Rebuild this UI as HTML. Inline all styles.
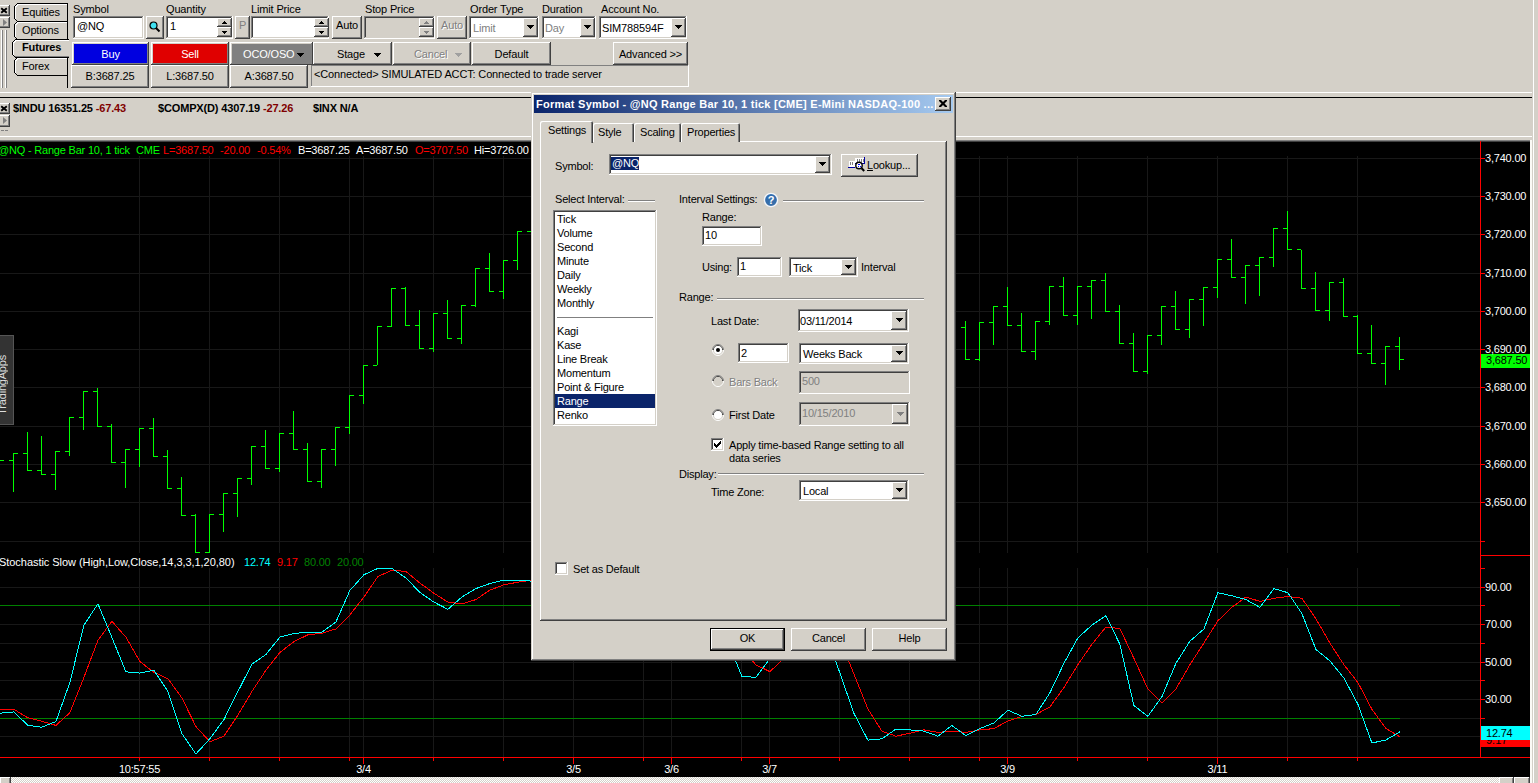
<!DOCTYPE html><html><head><meta charset="utf-8"><title>TradeStation</title><style>

html,body{margin:0;padding:0}
body{width:1538px;height:783px;overflow:hidden;position:relative;background:#d4d0c8;font:11px/13px "Liberation Sans",sans-serif;color:#000}
.abs{position:absolute;box-sizing:border-box}
.ab{position:absolute;display:block}
.t{position:absolute;white-space:pre;font:11px/13px "Liberation Sans",sans-serif;letter-spacing:-0.15px}
.dlg .t{letter-spacing:-0.2px}
.raised{background:#d4d0c8;box-shadow:inset -1px -1px #404040,inset 1px 1px #fff,inset -2px -2px #808080,inset 2px 2px #d4d0c8}
.raised2{box-shadow:inset -1px -1px #404040,inset 1px 1px #fff,inset -2px -2px #808080,inset 2px 2px #d4d0c8}
.sunk{box-shadow:inset -1px -1px #fff,inset 1px 1px #808080,inset -2px -2px #d4d0c8,inset 2px 2px #404040}
.thinsunk{box-shadow:inset -1px -1px #fff,inset 1px 1px #808080}
.winframe{background:#d4d0c8;box-shadow:inset -1px -1px #404040,inset 1px 1px #d4d0c8,inset -2px -2px #808080,inset 2px 2px #fff}
.defbtn{background:#d4d0c8;border:1px solid #000;box-shadow:inset -1px -1px #404040,inset 1px 1px #fff,inset -2px -2px #808080}
.tabv{background:#d4d0c8;border:1px solid #000;border-left:1px solid #000;border-radius:4px 0 0 4px;box-shadow:inset 1px 1px #fff}
.tabv.act{box-shadow:inset 1px 1px #fff}
.tabh{background:#d4d0c8;box-shadow:inset 1px 1px #fff,inset -1px 0 #404040,inset -2px 0 #808080;border-radius:2px 2px 0 0}
.tabh.act{box-shadow:inset 1px 1px #fff,inset -1px 0 #404040,inset -2px 0 #808080}

</style></head><body>
<svg id="chart" width="1538" height="783" viewBox="0 0 1538 783" style="position:absolute;left:0;top:0" shape-rendering="crispEdges">
<rect x="0" y="141" width="1530" height="636" fill="#000"/>
<rect x="0" y="140" width="1530" height="1" fill="#808080"/>
<rect x="0" y="141" width="1530" height="1" fill="#404040"/>
<rect x="0" y="158" width="1480" height="1" fill="#181818"/>
<rect x="0" y="196" width="1480" height="1" fill="#181818"/>
<rect x="0" y="234" width="1480" height="1" fill="#181818"/>
<rect x="0" y="273" width="1480" height="1" fill="#181818"/>
<rect x="0" y="311" width="1480" height="1" fill="#181818"/>
<rect x="0" y="349" width="1480" height="1" fill="#181818"/>
<rect x="0" y="387" width="1480" height="1" fill="#181818"/>
<rect x="0" y="426" width="1480" height="1" fill="#181818"/>
<rect x="0" y="464" width="1480" height="1" fill="#181818"/>
<rect x="0" y="502" width="1480" height="1" fill="#181818"/>
<rect x="0" y="541" width="1480" height="1" fill="#181818"/>
<rect x="139" y="156" width="1" height="397" fill="#181818"/>
<rect x="139" y="568" width="1" height="189" fill="#181818"/>
<rect x="209" y="156" width="1" height="397" fill="#181818"/>
<rect x="209" y="568" width="1" height="189" fill="#181818"/>
<rect x="279" y="156" width="1" height="397" fill="#181818"/>
<rect x="279" y="568" width="1" height="189" fill="#181818"/>
<rect x="349" y="156" width="1" height="397" fill="#181818"/>
<rect x="349" y="568" width="1" height="189" fill="#181818"/>
<rect x="363" y="156" width="1" height="397" fill="#181818"/>
<rect x="363" y="568" width="1" height="189" fill="#181818"/>
<rect x="433" y="156" width="1" height="397" fill="#181818"/>
<rect x="433" y="568" width="1" height="189" fill="#181818"/>
<rect x="503" y="156" width="1" height="397" fill="#181818"/>
<rect x="503" y="568" width="1" height="189" fill="#181818"/>
<rect x="573" y="156" width="1" height="397" fill="#181818"/>
<rect x="573" y="568" width="1" height="189" fill="#181818"/>
<rect x="643" y="156" width="1" height="397" fill="#181818"/>
<rect x="643" y="568" width="1" height="189" fill="#181818"/>
<rect x="671" y="156" width="1" height="397" fill="#181818"/>
<rect x="671" y="568" width="1" height="189" fill="#181818"/>
<rect x="741" y="156" width="1" height="397" fill="#181818"/>
<rect x="741" y="568" width="1" height="189" fill="#181818"/>
<rect x="769" y="156" width="1" height="397" fill="#181818"/>
<rect x="769" y="568" width="1" height="189" fill="#181818"/>
<rect x="839" y="156" width="1" height="397" fill="#181818"/>
<rect x="839" y="568" width="1" height="189" fill="#181818"/>
<rect x="909" y="156" width="1" height="397" fill="#181818"/>
<rect x="909" y="568" width="1" height="189" fill="#181818"/>
<rect x="979" y="156" width="1" height="397" fill="#181818"/>
<rect x="979" y="568" width="1" height="189" fill="#181818"/>
<rect x="1007" y="156" width="1" height="397" fill="#181818"/>
<rect x="1007" y="568" width="1" height="189" fill="#181818"/>
<rect x="1077" y="156" width="1" height="397" fill="#181818"/>
<rect x="1077" y="568" width="1" height="189" fill="#181818"/>
<rect x="1147" y="156" width="1" height="397" fill="#181818"/>
<rect x="1147" y="568" width="1" height="189" fill="#181818"/>
<rect x="1217" y="156" width="1" height="397" fill="#181818"/>
<rect x="1217" y="568" width="1" height="189" fill="#181818"/>
<rect x="1287" y="156" width="1" height="397" fill="#181818"/>
<rect x="1287" y="568" width="1" height="189" fill="#181818"/>
<rect x="1357" y="156" width="1" height="397" fill="#181818"/>
<rect x="1357" y="568" width="1" height="189" fill="#181818"/>
<rect x="0" y="587" width="1480" height="1" fill="#181818"/>
<rect x="0" y="624" width="1480" height="1" fill="#181818"/>
<rect x="0" y="643" width="1480" height="1" fill="#181818"/>
<rect x="0" y="662" width="1480" height="1" fill="#181818"/>
<rect x="0" y="680" width="1480" height="1" fill="#181818"/>
<rect x="0" y="699" width="1480" height="1" fill="#181818"/>
<rect x="0" y="736" width="1480" height="1" fill="#181818"/>
<rect x="0" y="605" width="1400" height="1" fill="#008000"/>
<rect x="0" y="718" width="1400" height="1" fill="#008000"/>
<rect x="1400" y="605" width="80" height="1" fill="#181818"/>
<rect x="1400" y="718" width="80" height="1" fill="#181818"/>
<rect x="0" y="460" width="4" height="1" fill="#00ff00"/>
<rect x="13" y="453" width="1" height="39" fill="#00ff00"/>
<rect x="9" y="460" width="4" height="1" fill="#00ff00"/>
<rect x="14" y="453" width="4" height="1" fill="#00ff00"/>
<rect x="27" y="432" width="1" height="39" fill="#00ff00"/>
<rect x="23" y="453" width="4" height="1" fill="#00ff00"/>
<rect x="28" y="470" width="4" height="1" fill="#00ff00"/>
<rect x="41" y="436" width="1" height="39" fill="#00ff00"/>
<rect x="37" y="470" width="4" height="1" fill="#00ff00"/>
<rect x="42" y="474" width="4" height="1" fill="#00ff00"/>
<rect x="55" y="451" width="1" height="39" fill="#00ff00"/>
<rect x="51" y="474" width="4" height="1" fill="#00ff00"/>
<rect x="56" y="451" width="4" height="1" fill="#00ff00"/>
<rect x="69" y="417" width="1" height="39" fill="#00ff00"/>
<rect x="65" y="451" width="4" height="1" fill="#00ff00"/>
<rect x="70" y="417" width="4" height="1" fill="#00ff00"/>
<rect x="83" y="391" width="1" height="39" fill="#00ff00"/>
<rect x="79" y="417" width="4" height="1" fill="#00ff00"/>
<rect x="84" y="391" width="4" height="1" fill="#00ff00"/>
<rect x="97" y="388" width="1" height="39" fill="#00ff00"/>
<rect x="93" y="391" width="4" height="1" fill="#00ff00"/>
<rect x="98" y="426" width="4" height="1" fill="#00ff00"/>
<rect x="111" y="424" width="1" height="39" fill="#00ff00"/>
<rect x="107" y="426" width="4" height="1" fill="#00ff00"/>
<rect x="112" y="462" width="4" height="1" fill="#00ff00"/>
<rect x="125" y="449" width="1" height="39" fill="#00ff00"/>
<rect x="121" y="462" width="4" height="1" fill="#00ff00"/>
<rect x="126" y="449" width="4" height="1" fill="#00ff00"/>
<rect x="139" y="428" width="1" height="39" fill="#00ff00"/>
<rect x="135" y="449" width="4" height="1" fill="#00ff00"/>
<rect x="140" y="428" width="4" height="1" fill="#00ff00"/>
<rect x="153" y="418" width="1" height="39" fill="#00ff00"/>
<rect x="149" y="428" width="4" height="1" fill="#00ff00"/>
<rect x="154" y="456" width="4" height="1" fill="#00ff00"/>
<rect x="167" y="450" width="1" height="39" fill="#00ff00"/>
<rect x="163" y="456" width="4" height="1" fill="#00ff00"/>
<rect x="168" y="488" width="4" height="1" fill="#00ff00"/>
<rect x="181" y="477" width="1" height="39" fill="#00ff00"/>
<rect x="177" y="488" width="4" height="1" fill="#00ff00"/>
<rect x="182" y="515" width="4" height="1" fill="#00ff00"/>
<rect x="195" y="514" width="1" height="39" fill="#00ff00"/>
<rect x="191" y="515" width="4" height="1" fill="#00ff00"/>
<rect x="196" y="552" width="4" height="1" fill="#00ff00"/>
<rect x="209" y="514" width="1" height="39" fill="#00ff00"/>
<rect x="205" y="552" width="4" height="1" fill="#00ff00"/>
<rect x="210" y="514" width="4" height="1" fill="#00ff00"/>
<rect x="223" y="493" width="1" height="39" fill="#00ff00"/>
<rect x="219" y="514" width="4" height="1" fill="#00ff00"/>
<rect x="224" y="493" width="4" height="1" fill="#00ff00"/>
<rect x="237" y="478" width="1" height="39" fill="#00ff00"/>
<rect x="233" y="493" width="4" height="1" fill="#00ff00"/>
<rect x="238" y="478" width="4" height="1" fill="#00ff00"/>
<rect x="251" y="446" width="1" height="39" fill="#00ff00"/>
<rect x="247" y="478" width="4" height="1" fill="#00ff00"/>
<rect x="252" y="446" width="4" height="1" fill="#00ff00"/>
<rect x="265" y="430" width="1" height="39" fill="#00ff00"/>
<rect x="261" y="446" width="4" height="1" fill="#00ff00"/>
<rect x="266" y="468" width="4" height="1" fill="#00ff00"/>
<rect x="279" y="433" width="1" height="39" fill="#00ff00"/>
<rect x="275" y="468" width="4" height="1" fill="#00ff00"/>
<rect x="280" y="433" width="4" height="1" fill="#00ff00"/>
<rect x="293" y="411" width="1" height="39" fill="#00ff00"/>
<rect x="289" y="433" width="4" height="1" fill="#00ff00"/>
<rect x="294" y="449" width="4" height="1" fill="#00ff00"/>
<rect x="307" y="443" width="1" height="39" fill="#00ff00"/>
<rect x="303" y="449" width="4" height="1" fill="#00ff00"/>
<rect x="308" y="481" width="4" height="1" fill="#00ff00"/>
<rect x="321" y="449" width="1" height="39" fill="#00ff00"/>
<rect x="317" y="481" width="4" height="1" fill="#00ff00"/>
<rect x="322" y="449" width="4" height="1" fill="#00ff00"/>
<rect x="335" y="427" width="1" height="39" fill="#00ff00"/>
<rect x="331" y="449" width="4" height="1" fill="#00ff00"/>
<rect x="336" y="427" width="4" height="1" fill="#00ff00"/>
<rect x="349" y="395" width="1" height="39" fill="#00ff00"/>
<rect x="345" y="427" width="4" height="1" fill="#00ff00"/>
<rect x="350" y="395" width="4" height="1" fill="#00ff00"/>
<rect x="363" y="365" width="1" height="39" fill="#00ff00"/>
<rect x="359" y="395" width="4" height="1" fill="#00ff00"/>
<rect x="364" y="365" width="4" height="1" fill="#00ff00"/>
<rect x="377" y="326" width="1" height="39" fill="#00ff00"/>
<rect x="373" y="365" width="4" height="1" fill="#00ff00"/>
<rect x="378" y="326" width="4" height="1" fill="#00ff00"/>
<rect x="391" y="288" width="1" height="39" fill="#00ff00"/>
<rect x="387" y="326" width="4" height="1" fill="#00ff00"/>
<rect x="392" y="288" width="4" height="1" fill="#00ff00"/>
<rect x="405" y="287" width="1" height="39" fill="#00ff00"/>
<rect x="401" y="288" width="4" height="1" fill="#00ff00"/>
<rect x="406" y="325" width="4" height="1" fill="#00ff00"/>
<rect x="419" y="310" width="1" height="39" fill="#00ff00"/>
<rect x="415" y="325" width="4" height="1" fill="#00ff00"/>
<rect x="420" y="348" width="4" height="1" fill="#00ff00"/>
<rect x="433" y="313" width="1" height="39" fill="#00ff00"/>
<rect x="429" y="348" width="4" height="1" fill="#00ff00"/>
<rect x="434" y="313" width="4" height="1" fill="#00ff00"/>
<rect x="447" y="300" width="1" height="39" fill="#00ff00"/>
<rect x="443" y="313" width="4" height="1" fill="#00ff00"/>
<rect x="448" y="338" width="4" height="1" fill="#00ff00"/>
<rect x="461" y="305" width="1" height="39" fill="#00ff00"/>
<rect x="457" y="338" width="4" height="1" fill="#00ff00"/>
<rect x="462" y="305" width="4" height="1" fill="#00ff00"/>
<rect x="475" y="268" width="1" height="39" fill="#00ff00"/>
<rect x="471" y="305" width="4" height="1" fill="#00ff00"/>
<rect x="476" y="268" width="4" height="1" fill="#00ff00"/>
<rect x="489" y="253" width="1" height="39" fill="#00ff00"/>
<rect x="485" y="268" width="4" height="1" fill="#00ff00"/>
<rect x="490" y="291" width="4" height="1" fill="#00ff00"/>
<rect x="503" y="260" width="1" height="39" fill="#00ff00"/>
<rect x="499" y="291" width="4" height="1" fill="#00ff00"/>
<rect x="504" y="260" width="4" height="1" fill="#00ff00"/>
<rect x="517" y="231" width="1" height="39" fill="#00ff00"/>
<rect x="513" y="260" width="4" height="1" fill="#00ff00"/>
<rect x="518" y="231" width="4" height="1" fill="#00ff00"/>
<rect x="965" y="321" width="1" height="39" fill="#00ff00"/>
<rect x="961" y="327" width="4" height="1" fill="#00ff00"/>
<rect x="966" y="359" width="4" height="1" fill="#00ff00"/>
<rect x="979" y="322" width="1" height="39" fill="#00ff00"/>
<rect x="975" y="359" width="4" height="1" fill="#00ff00"/>
<rect x="980" y="322" width="4" height="1" fill="#00ff00"/>
<rect x="993" y="306" width="1" height="39" fill="#00ff00"/>
<rect x="989" y="322" width="4" height="1" fill="#00ff00"/>
<rect x="994" y="306" width="4" height="1" fill="#00ff00"/>
<rect x="1007" y="287" width="1" height="39" fill="#00ff00"/>
<rect x="1003" y="306" width="4" height="1" fill="#00ff00"/>
<rect x="1008" y="325" width="4" height="1" fill="#00ff00"/>
<rect x="1021" y="313" width="1" height="39" fill="#00ff00"/>
<rect x="1017" y="325" width="4" height="1" fill="#00ff00"/>
<rect x="1022" y="351" width="4" height="1" fill="#00ff00"/>
<rect x="1035" y="321" width="1" height="39" fill="#00ff00"/>
<rect x="1031" y="351" width="4" height="1" fill="#00ff00"/>
<rect x="1036" y="321" width="4" height="1" fill="#00ff00"/>
<rect x="1049" y="286" width="1" height="39" fill="#00ff00"/>
<rect x="1045" y="321" width="4" height="1" fill="#00ff00"/>
<rect x="1050" y="286" width="4" height="1" fill="#00ff00"/>
<rect x="1063" y="277" width="1" height="39" fill="#00ff00"/>
<rect x="1059" y="286" width="4" height="1" fill="#00ff00"/>
<rect x="1064" y="315" width="4" height="1" fill="#00ff00"/>
<rect x="1077" y="286" width="1" height="39" fill="#00ff00"/>
<rect x="1073" y="315" width="4" height="1" fill="#00ff00"/>
<rect x="1078" y="286" width="4" height="1" fill="#00ff00"/>
<rect x="1091" y="280" width="1" height="39" fill="#00ff00"/>
<rect x="1087" y="286" width="4" height="1" fill="#00ff00"/>
<rect x="1092" y="280" width="4" height="1" fill="#00ff00"/>
<rect x="1105" y="273" width="1" height="39" fill="#00ff00"/>
<rect x="1101" y="280" width="4" height="1" fill="#00ff00"/>
<rect x="1106" y="311" width="4" height="1" fill="#00ff00"/>
<rect x="1119" y="305" width="1" height="39" fill="#00ff00"/>
<rect x="1115" y="311" width="4" height="1" fill="#00ff00"/>
<rect x="1120" y="343" width="4" height="1" fill="#00ff00"/>
<rect x="1133" y="333" width="1" height="39" fill="#00ff00"/>
<rect x="1129" y="343" width="4" height="1" fill="#00ff00"/>
<rect x="1134" y="371" width="4" height="1" fill="#00ff00"/>
<rect x="1147" y="335" width="1" height="39" fill="#00ff00"/>
<rect x="1143" y="371" width="4" height="1" fill="#00ff00"/>
<rect x="1148" y="335" width="4" height="1" fill="#00ff00"/>
<rect x="1161" y="306" width="1" height="39" fill="#00ff00"/>
<rect x="1157" y="335" width="4" height="1" fill="#00ff00"/>
<rect x="1162" y="306" width="4" height="1" fill="#00ff00"/>
<rect x="1175" y="291" width="1" height="39" fill="#00ff00"/>
<rect x="1171" y="306" width="4" height="1" fill="#00ff00"/>
<rect x="1176" y="329" width="4" height="1" fill="#00ff00"/>
<rect x="1189" y="299" width="1" height="39" fill="#00ff00"/>
<rect x="1185" y="329" width="4" height="1" fill="#00ff00"/>
<rect x="1190" y="299" width="4" height="1" fill="#00ff00"/>
<rect x="1203" y="287" width="1" height="39" fill="#00ff00"/>
<rect x="1199" y="299" width="4" height="1" fill="#00ff00"/>
<rect x="1204" y="287" width="4" height="1" fill="#00ff00"/>
<rect x="1217" y="259" width="1" height="39" fill="#00ff00"/>
<rect x="1213" y="287" width="4" height="1" fill="#00ff00"/>
<rect x="1218" y="259" width="4" height="1" fill="#00ff00"/>
<rect x="1231" y="239" width="1" height="39" fill="#00ff00"/>
<rect x="1227" y="259" width="4" height="1" fill="#00ff00"/>
<rect x="1232" y="277" width="4" height="1" fill="#00ff00"/>
<rect x="1245" y="265" width="1" height="39" fill="#00ff00"/>
<rect x="1241" y="277" width="4" height="1" fill="#00ff00"/>
<rect x="1246" y="265" width="4" height="1" fill="#00ff00"/>
<rect x="1259" y="257" width="1" height="39" fill="#00ff00"/>
<rect x="1255" y="265" width="4" height="1" fill="#00ff00"/>
<rect x="1260" y="257" width="4" height="1" fill="#00ff00"/>
<rect x="1273" y="228" width="1" height="39" fill="#00ff00"/>
<rect x="1269" y="257" width="4" height="1" fill="#00ff00"/>
<rect x="1274" y="228" width="4" height="1" fill="#00ff00"/>
<rect x="1287" y="211" width="1" height="39" fill="#00ff00"/>
<rect x="1283" y="228" width="4" height="1" fill="#00ff00"/>
<rect x="1288" y="249" width="4" height="1" fill="#00ff00"/>
<rect x="1301" y="250" width="1" height="39" fill="#00ff00"/>
<rect x="1297" y="249" width="4" height="1" fill="#00ff00"/>
<rect x="1302" y="288" width="4" height="1" fill="#00ff00"/>
<rect x="1315" y="272" width="1" height="39" fill="#00ff00"/>
<rect x="1311" y="288" width="4" height="1" fill="#00ff00"/>
<rect x="1316" y="310" width="4" height="1" fill="#00ff00"/>
<rect x="1329" y="282" width="1" height="39" fill="#00ff00"/>
<rect x="1325" y="310" width="4" height="1" fill="#00ff00"/>
<rect x="1330" y="282" width="4" height="1" fill="#00ff00"/>
<rect x="1343" y="278" width="1" height="39" fill="#00ff00"/>
<rect x="1339" y="282" width="4" height="1" fill="#00ff00"/>
<rect x="1344" y="316" width="4" height="1" fill="#00ff00"/>
<rect x="1357" y="315" width="1" height="39" fill="#00ff00"/>
<rect x="1353" y="316" width="4" height="1" fill="#00ff00"/>
<rect x="1358" y="353" width="4" height="1" fill="#00ff00"/>
<rect x="1371" y="325" width="1" height="39" fill="#00ff00"/>
<rect x="1367" y="353" width="4" height="1" fill="#00ff00"/>
<rect x="1372" y="363" width="4" height="1" fill="#00ff00"/>
<rect x="1385" y="346" width="1" height="39" fill="#00ff00"/>
<rect x="1381" y="363" width="4" height="1" fill="#00ff00"/>
<rect x="1386" y="346" width="4" height="1" fill="#00ff00"/>
<rect x="527" y="231" width="4" height="1" fill="#00ff00"/>
<rect x="1399" y="337" width="1" height="33" fill="#00ff00"/>
<rect x="1395" y="346" width="4" height="1" fill="#00ff00"/>
<rect x="1400" y="359" width="4" height="1" fill="#00ff00"/>
<g clip-path="url(#stclip)">
<polyline points="-0.1,709.3 13.9,709.3 27.9,717.8 41.9,721.3 55.9,725.4 69.9,712.7 83.9,677.4 97.9,640.4 111.9,621.3 125.9,637.1 139.9,661.6 153.9,672.3 167.9,678.7 181.9,697.9 195.9,726.5 209.9,741.8 223.9,736.2 237.9,715.2 251.9,691.5 265.9,670.3 279.9,652.4 293.9,641.7 307.9,634.8 321.9,633.3 335.9,628.9 349.9,614.9 363.9,597.0 377.9,576.6 391.9,570.2 405.9,571.5 419.9,583.0 433.9,593.2 447.9,602.1 461.9,603.9 475.9,599.6 489.9,590.1 503.9,584.8 517.9,582.2 531.9,580.0 545.9,582.0 559.9,590.0 573.9,600.0 587.9,612.0 601.9,622.0 615.9,632.0 629.9,640.0 643.9,648.0 657.9,652.0 671.9,652.0 685.9,648.0 699.9,640.0 713.9,640.0 727.9,645.0 741.9,648.0 755.9,664.8 769.9,671.7 783.9,658.3 797.9,650.0 811.9,645.0 825.9,640.0 839.9,639.0 853.9,674.0 867.9,709.0 881.9,731.1 895.9,736.2 909.9,733.2 923.9,729.9 937.9,732.4 951.9,731.1 965.9,732.4 979.9,729.9 993.9,728.6 1007.9,720.9 1021.9,716.3 1035.9,714.5 1049.9,706.9 1063.9,687.7 1077.9,664.7 1091.9,644.3 1105.9,627.0 1119.9,628.5 1133.9,658.3 1147.9,689.0 1161.9,703.0 1175.9,689.0 1189.9,664.7 1203.9,643.0 1217.9,620.8 1231.9,607.3 1245.9,597.0 1259.9,601.4 1273.9,598.3 1287.9,596.5 1301.9,598.3 1315.9,618.7 1329.9,643.0 1343.9,664.7 1357.9,682.5 1371.9,709.3 1385.9,728.5 1399.9,736.9" fill="none" stroke="#ff0000" stroke-width="1" shape-rendering="crispEdges"/>
<polyline points="-0.1,713.2 13.9,711.9 27.9,725.4 41.9,727.2 55.9,721.6 69.9,682.5 83.9,625.1 97.9,603.9 111.9,637.5 125.9,671.8 139.9,673.1 153.9,670.3 167.9,691.5 181.9,733.6 195.9,754.0 209.9,738.7 223.9,719.6 237.9,691.5 251.9,664.2 265.9,654.5 279.9,637.1 293.9,633.5 307.9,632.2 321.9,632.2 335.9,622.0 349.9,590.4 363.9,574.8 377.9,568.4 391.9,568.4 405.9,577.9 419.9,592.4 433.9,602.1 447.9,609.3 461.9,597.0 475.9,588.6 489.9,583.5 503.9,580.0 517.9,580.0 531.9,581.2 545.9,590.0 559.9,600.0 573.9,610.0 587.9,620.0 601.9,630.0 615.9,640.0 629.9,648.0 643.9,652.0 657.9,655.0 671.9,650.0 685.9,640.0 699.9,630.0 713.9,640.0 727.9,641.8 741.9,676.3 755.9,677.4 769.9,658.7 783.9,645.0 797.9,630.0 811.9,625.0 825.9,633.0 839.9,673.0 853.9,713.3 867.9,740.1 881.9,738.8 895.9,729.1 909.9,729.9 923.9,731.1 937.9,736.2 951.9,725.5 965.9,735.7 979.9,728.6 993.9,723.0 1007.9,710.2 1021.9,716.3 1035.9,714.5 1049.9,692.8 1063.9,663.4 1077.9,637.9 1091.9,625.1 1105.9,615.7 1119.9,644.3 1133.9,705.6 1147.9,716.3 1161.9,696.7 1175.9,663.4 1189.9,641.2 1203.9,629.0 1217.9,592.7 1231.9,595.8 1245.9,599.6 1259.9,607.3 1273.9,588.6 1287.9,592.7 1301.9,613.6 1315.9,649.4 1329.9,660.9 1343.9,678.0 1357.9,704.2 1371.9,743.0 1385.9,740.0 1399.9,731.8" fill="none" stroke="#00ffff" stroke-width="1" shape-rendering="crispEdges"/>
</g>
<defs><clipPath id="stclip"><rect x="0" y="556" width="1480" height="201"/></clipPath></defs>
<rect x="1480" y="141" width="1" height="617" fill="#ff0000"/>
<rect x="0" y="757" width="1530" height="1" fill="#ff0000"/>
<rect x="1480" y="555" width="50" height="1" fill="#ff0000"/>
<rect x="1481" y="158" width="4" height="1" fill="#ff0000"/>
<rect x="1481" y="196" width="4" height="1" fill="#ff0000"/>
<rect x="1481" y="234" width="4" height="1" fill="#ff0000"/>
<rect x="1481" y="273" width="4" height="1" fill="#ff0000"/>
<rect x="1481" y="311" width="4" height="1" fill="#ff0000"/>
<rect x="1481" y="349" width="4" height="1" fill="#ff0000"/>
<rect x="1481" y="387" width="4" height="1" fill="#ff0000"/>
<rect x="1481" y="426" width="4" height="1" fill="#ff0000"/>
<rect x="1481" y="464" width="4" height="1" fill="#ff0000"/>
<rect x="1481" y="502" width="4" height="1" fill="#ff0000"/>
<rect x="1481" y="541" width="4" height="1" fill="#ff0000"/>
<rect x="1481" y="568" width="4" height="1" fill="#ff0000"/>
<rect x="1481" y="587" width="4" height="1" fill="#ff0000"/>
<rect x="1481" y="605" width="4" height="1" fill="#ff0000"/>
<rect x="1481" y="624" width="4" height="1" fill="#ff0000"/>
<rect x="1481" y="643" width="4" height="1" fill="#ff0000"/>
<rect x="1481" y="662" width="4" height="1" fill="#ff0000"/>
<rect x="1481" y="680" width="4" height="1" fill="#ff0000"/>
<rect x="1481" y="699" width="4" height="1" fill="#ff0000"/>
<rect x="1481" y="718" width="4" height="1" fill="#ff0000"/>
<rect x="1481" y="736" width="4" height="1" fill="#ff0000"/>
<rect x="139" y="758" width="1" height="3" fill="#ff0000"/>
<rect x="209" y="758" width="1" height="3" fill="#ff0000"/>
<rect x="279" y="758" width="1" height="3" fill="#ff0000"/>
<rect x="349" y="758" width="1" height="3" fill="#ff0000"/>
<rect x="363" y="758" width="1" height="6" fill="#ff0000"/>
<rect x="433" y="758" width="1" height="3" fill="#ff0000"/>
<rect x="503" y="758" width="1" height="3" fill="#ff0000"/>
<rect x="573" y="758" width="1" height="6" fill="#ff0000"/>
<rect x="643" y="758" width="1" height="3" fill="#ff0000"/>
<rect x="671" y="758" width="1" height="6" fill="#ff0000"/>
<rect x="741" y="758" width="1" height="3" fill="#ff0000"/>
<rect x="769" y="758" width="1" height="6" fill="#ff0000"/>
<rect x="839" y="758" width="1" height="3" fill="#ff0000"/>
<rect x="909" y="758" width="1" height="3" fill="#ff0000"/>
<rect x="979" y="758" width="1" height="3" fill="#ff0000"/>
<rect x="1007" y="758" width="1" height="6" fill="#ff0000"/>
<rect x="1077" y="758" width="1" height="3" fill="#ff0000"/>
<rect x="1147" y="758" width="1" height="3" fill="#ff0000"/>
<rect x="1217" y="758" width="1" height="6" fill="#ff0000"/>
<rect x="1287" y="758" width="1" height="3" fill="#ff0000"/>
<rect x="1357" y="758" width="1" height="3" fill="#ff0000"/>
<rect x="1481" y="354" width="49" height="14" fill="#00ff00"/>
<rect x="1481" y="733" width="49" height="14" fill="#ff0000"/>
<text x="1486" y="744" font-family="Liberation Sans" font-size="11" fill="#000">9.17</text>
<rect x="1481" y="726" width="49" height="14" fill="#00ffff"/>
<rect x="1530" y="140" width="2" height="643" fill="#fbfaf6"/>
<rect x="1533" y="0" width="1" height="783" fill="#ffffff"/>
</svg>
<div style="position:absolute;white-space:pre;font:11px/13px Liberation Sans,sans-serif;letter-spacing:-0.2px;left:1485px;top:152px;color:#fff">3,740.00</div>
<div style="position:absolute;white-space:pre;font:11px/13px Liberation Sans,sans-serif;letter-spacing:-0.2px;left:1485px;top:190px;color:#fff">3,730.00</div>
<div style="position:absolute;white-space:pre;font:11px/13px Liberation Sans,sans-serif;letter-spacing:-0.2px;left:1485px;top:228px;color:#fff">3,720.00</div>
<div style="position:absolute;white-space:pre;font:11px/13px Liberation Sans,sans-serif;letter-spacing:-0.2px;left:1485px;top:267px;color:#fff">3,710.00</div>
<div style="position:absolute;white-space:pre;font:11px/13px Liberation Sans,sans-serif;letter-spacing:-0.2px;left:1485px;top:305px;color:#fff">3,700.00</div>
<div style="position:absolute;white-space:pre;font:11px/13px Liberation Sans,sans-serif;letter-spacing:-0.2px;left:1485px;top:343px;color:#fff">3,690.00</div>
<div style="position:absolute;white-space:pre;font:11px/13px Liberation Sans,sans-serif;letter-spacing:-0.2px;left:1485px;top:381px;color:#fff">3,680.00</div>
<div style="position:absolute;white-space:pre;font:11px/13px Liberation Sans,sans-serif;letter-spacing:-0.2px;left:1485px;top:420px;color:#fff">3,670.00</div>
<div style="position:absolute;white-space:pre;font:11px/13px Liberation Sans,sans-serif;letter-spacing:-0.2px;left:1485px;top:458px;color:#fff">3,660.00</div>
<div style="position:absolute;white-space:pre;font:11px/13px Liberation Sans,sans-serif;letter-spacing:-0.2px;left:1485px;top:496px;color:#fff">3,650.00</div>
<div style="position:absolute;white-space:pre;font:11px/13px Liberation Sans,sans-serif;letter-spacing:-0.2px;left:1486px;top:354px;color:#000">3,687.50</div>
<div style="position:absolute;white-space:pre;font:11px/13px Liberation Sans,sans-serif;letter-spacing:-0.2px;left:1485px;top:581px;color:#fff">90.00</div>
<div style="position:absolute;white-space:pre;font:11px/13px Liberation Sans,sans-serif;letter-spacing:-0.2px;left:1485px;top:618px;color:#fff">70.00</div>
<div style="position:absolute;white-space:pre;font:11px/13px Liberation Sans,sans-serif;letter-spacing:-0.2px;left:1485px;top:656px;color:#fff">50.00</div>
<div style="position:absolute;white-space:pre;font:11px/13px Liberation Sans,sans-serif;letter-spacing:-0.2px;left:1485px;top:693px;color:#fff">30.00</div>
<div style="position:absolute;white-space:pre;font:11px/13px Liberation Sans,sans-serif;letter-spacing:-0.2px;left:1486px;top:727px;color:#000">12.74</div>
<div style="position:absolute;white-space:pre;font:11px/13px Liberation Sans,sans-serif;letter-spacing:-0.2px;left:99.5px;width:80px;text-align:center;top:763px;color:#fff">10:57:55</div>
<div style="position:absolute;white-space:pre;font:11px/13px Liberation Sans,sans-serif;letter-spacing:-0.2px;left:323.5px;width:80px;text-align:center;top:763px;color:#fff">3/4</div>
<div style="position:absolute;white-space:pre;font:11px/13px Liberation Sans,sans-serif;letter-spacing:-0.2px;left:533.5px;width:80px;text-align:center;top:763px;color:#fff">3/5</div>
<div style="position:absolute;white-space:pre;font:11px/13px Liberation Sans,sans-serif;letter-spacing:-0.2px;left:631.5px;width:80px;text-align:center;top:763px;color:#fff">3/6</div>
<div style="position:absolute;white-space:pre;font:11px/13px Liberation Sans,sans-serif;letter-spacing:-0.2px;left:729.5px;width:80px;text-align:center;top:763px;color:#fff">3/7</div>
<div style="position:absolute;white-space:pre;font:11px/13px Liberation Sans,sans-serif;letter-spacing:-0.2px;left:967.5px;width:80px;text-align:center;top:763px;color:#fff">3/9</div>
<div style="position:absolute;white-space:pre;font:11px/13px Liberation Sans,sans-serif;letter-spacing:-0.2px;left:1177.5px;width:80px;text-align:center;top:763px;color:#fff">3/11</div>
<div style="position:absolute;white-space:pre;font:11px/13px Liberation Sans,sans-serif;letter-spacing:-0.2px;left:-2px;top:144px;color:#00ff00">@NQ - Range Bar 10, 1 tick</div>
<div style="position:absolute;white-space:pre;font:11px/13px Liberation Sans,sans-serif;letter-spacing:-0.2px;left:136px;top:144px;color:#00ff00">CME</div>
<div style="position:absolute;white-space:pre;font:11px/13px Liberation Sans,sans-serif;letter-spacing:-0.2px;left:163px;top:144px;color:#ff0000">L=3687.50</div>
<div style="position:absolute;white-space:pre;font:11px/13px Liberation Sans,sans-serif;letter-spacing:-0.2px;left:220px;top:144px;color:#ff0000">-20.00</div>
<div style="position:absolute;white-space:pre;font:11px/13px Liberation Sans,sans-serif;letter-spacing:-0.2px;left:257px;top:144px;color:#ff0000">-0.54%</div>
<div style="position:absolute;white-space:pre;font:11px/13px Liberation Sans,sans-serif;letter-spacing:-0.2px;left:298px;top:144px;color:#fff">B=3687.25</div>
<div style="position:absolute;white-space:pre;font:11px/13px Liberation Sans,sans-serif;letter-spacing:-0.2px;left:356px;top:144px;color:#fff">A=3687.50</div>
<div style="position:absolute;white-space:pre;font:11px/13px Liberation Sans,sans-serif;letter-spacing:-0.2px;left:415px;top:144px;color:#ff0000">O=3707.50</div>
<div style="position:absolute;white-space:pre;font:11px/13px Liberation Sans,sans-serif;letter-spacing:-0.2px;left:474px;top:144px;color:#fff">Hi=3726.00</div>
<div style="position:absolute;white-space:pre;font:11px/13px Liberation Sans,sans-serif;letter-spacing:-0.2px;left:-1px;top:556px;color:#fff;letter-spacing:-0.05px">Stochastic Slow (High,Low,Close,14,3,3,1,20,80)</div>
<div style="position:absolute;white-space:pre;font:11px/13px Liberation Sans,sans-serif;letter-spacing:-0.2px;left:244px;top:556px;color:#00ffff">12.74</div>
<div style="position:absolute;white-space:pre;font:11px/13px Liberation Sans,sans-serif;letter-spacing:-0.2px;left:277px;top:556px;color:#ff0000">9.17</div>
<div style="position:absolute;white-space:pre;font:11px/13px Liberation Sans,sans-serif;letter-spacing:-0.2px;left:304px;top:556px;color:#008000">80.00</div>
<div style="position:absolute;white-space:pre;font:11px/13px Liberation Sans,sans-serif;letter-spacing:-0.2px;left:337px;top:556px;color:#008000">20.00</div>
<div style="position:absolute;left:-1px;top:335px;width:15px;height:90px;background:#333;border:1px solid #555;box-sizing:border-box"></div>
<div style="position:absolute;white-space:pre;font:11px/13px Liberation Sans,sans-serif;letter-spacing:-0.2px;left:-4px;top:355px;color:#ddd;writing-mode:vertical-rl;transform:rotate(180deg);font-size:11px">TradingApps</div>
<div style="position:absolute;left:0;top:777px;width:1530px;height:6px;background:repeating-conic-gradient(#fff 0 25%,#d4d0c8 0 50%) 0 0/2px 2px"></div>
<div class="abs raised" style="left:0;top:777px;width:11px;height:17px"></div>
<div class="abs raised" style="left:1499px;top:777px;width:15px;height:17px"></div>
<div class="abs raised" style="left:1514px;top:777px;width:16px;height:17px"></div>
<div class="abs raised" style="left:-2px;top:5px;width:12px;height:11px;"></div>
<svg class="ab" style="left:0px;top:7px" width="8" height="7"><path d="M1.2 1.2l5.6 4.6M6.8 1.2l-5.6 4.6" stroke="#000" stroke-width="1.9"/></svg>
<div class="abs raised" style="left:-2px;top:17px;width:12px;height:11px;"></div>
<svg class="ab" style="left:3px;top:19px" width="4" height="7"><path d="M0 0l4 3.5L0 7z" fill="#808080"/></svg>
<div class="abs" style="left:1px;top:30px;width:1px;height:58px;background:#fff"></div>
<div class="abs" style="left:2px;top:30px;width:1px;height:58px;background:#808080"></div>
<div class="abs" style="left:5px;top:30px;width:1px;height:58px;background:#fff"></div>
<div class="abs" style="left:6px;top:30px;width:1px;height:58px;background:#808080"></div>
<svg class="ab" style="left:0;top:0" width="72" height="90" shape-rendering="crispEdges"><rect x="67" y="3" width="1" height="36" fill="#000"/><rect x="67" y="57" width="1" height="31" fill="#000"/><path d="M17 3H67V22H17L14 19V6z" fill="#d4d0c8"/><path d="M67.5 3.5H17.5L14.5 6.5V18.5L17.5 21.5H67.5" fill="none" stroke="#000" stroke-width="1"/><path d="M67 4.5H18L15.5 7V18.5" fill="none" stroke="#fff" stroke-width="1"/><path d="M17 21H67V40H17L14 37V24z" fill="#d4d0c8"/><path d="M67.5 21.5H17.5L14.5 24.5V36.5L17.5 39.5H67.5" fill="none" stroke="#000" stroke-width="1"/><path d="M67 22.5H18L15.5 25V36.5" fill="none" stroke="#fff" stroke-width="1"/><path d="M17 57H67V76H17L14 73V60z" fill="#d4d0c8"/><path d="M67.5 57.5H17.5L14.5 60.5V72.5L17.5 75.5H67.5" fill="none" stroke="#000" stroke-width="1"/><path d="M67 58.5H18L15.5 61V72.5" fill="none" stroke="#fff" stroke-width="1"/><path d="M16 39H69V57H16L12 54V43z" fill="#d4d0c8"/><path d="M69 39.5H15.5L12.5 42.5V54.5L15.5 57.5H69" fill="none" stroke="#000" stroke-width="1"/><path d="M69 40.5H16L13.5 43V54.5" fill="none" stroke="#fff" stroke-width="1"/><rect x="15" y="56" width="54" height="1" fill="#808080"/></svg>
<div class="t" style="left:22px;top:6px;">Equities</div>
<div class="t" style="left:22px;top:24px;">Options</div>
<div class="t" style="left:22px;top:41px;font-weight:bold">Futures</div>
<div class="t" style="left:22px;top:60px;">Forex</div>
<div class="t" style="left:73px;top:3px;">Symbol</div>
<div class="t" style="left:166px;top:3px;">Quantity</div>
<div class="t" style="left:251px;top:3px;">Limit Price</div>
<div class="t" style="left:365px;top:3px;">Stop Price</div>
<div class="t" style="left:470px;top:3px;">Order Type</div>
<div class="t" style="left:542px;top:3px;">Duration</div>
<div class="t" style="left:601px;top:3px;">Account No.</div>
<div class="abs sunk" style="left:73px;top:16px;width:71px;height:23px;background:#fff"></div>
<div class="t" style="left:77px;top:20px;">@NQ</div>
<div class="abs raised" style="left:146px;top:16px;width:18px;height:23px;"></div>
<svg class="ab" style="left:149px;top:21px" width="12" height="12"><circle cx="4.5" cy="4.5" r="3.5" fill="#40e0f0" stroke="#000" stroke-width="1.2"/><path d="M7 7l3.5 3.5" stroke="#000" stroke-width="2"/></svg>
<div class="abs sunk" style="left:166px;top:16px;width:67px;height:23px;background:#fff"></div>
<div class="t" style="left:170px;top:20px;">1</div>
<div class="abs raised" style="left:217px;top:18px;width:15px;height:9px;"></div>
<div class="abs raised" style="left:217px;top:27px;width:15px;height:10px;"></div>
<svg class="ab" style="left:222px;top:21px" width="5" height="3"><path d="M2 0h1v1h1v1h1v1H0V2h1V1h1z" fill="#000"/></svg>
<svg class="ab" style="left:222px;top:31px" width="5" height="3"><path d="M0 0h5v1H4v1H3v1H2V2H1V1H0z" fill="#000"/></svg>
<div class="abs raised" style="left:235px;top:16px;width:15px;height:23px;"></div>
<div class="t" style="left:239px;top:19px;color:#808080">P</div>
<div class="abs sunk" style="left:251px;top:16px;width:78px;height:23px;background:#fff"></div>
<div class="abs raised" style="left:314px;top:18px;width:15px;height:9px;"></div>
<div class="abs raised" style="left:314px;top:27px;width:15px;height:10px;"></div>
<svg class="ab" style="left:319px;top:21px" width="5" height="3"><path d="M2 0h1v1h1v1h1v1H0V2h1V1h1z" fill="#000"/></svg>
<svg class="ab" style="left:319px;top:31px" width="5" height="3"><path d="M0 0h5v1H4v1H3v1H2V2H1V1H0z" fill="#000"/></svg>
<div class="abs raised" style="left:332px;top:16px;width:30px;height:23px;"></div>
<div class="t" style="left:332px;top:19px;width:30px;text-align:center;">Auto</div>
<div class="abs sunk" style="left:364px;top:16px;width:71px;height:23px;background:#d4d0c8"></div>
<div class="abs raised" style="left:419px;top:18px;width:15px;height:9px;"></div>
<div class="abs raised" style="left:419px;top:27px;width:15px;height:10px;"></div>
<svg class="ab" style="left:424px;top:21px" width="5" height="3"><path d="M2 0h1v1h1v1h1v1H0V2h1V1h1z" fill="#808080"/></svg>
<svg class="ab" style="left:424px;top:31px" width="5" height="3"><path d="M0 0h5v1H4v1H3v1H2V2H1V1H0z" fill="#808080"/></svg>
<div class="abs raised" style="left:437px;top:16px;width:30px;height:23px;"></div>
<div class="t" style="left:437px;top:19px;width:30px;text-align:center;color:#808080;text-shadow:1px 1px #fff">Auto</div>
<div class="abs sunk" style="left:469px;top:16px;width:70px;height:23px;background:#fff"></div>
<div class="t" style="left:473px;top:22px;color:#808080">Limit</div>
<div class="abs raised" style="left:523px;top:18px;width:15px;height:19px;"></div>
<svg class="ab" style="left:527px;top:25px" width="7" height="4"><path d="M0 0h7v1H6v1H5v1H4v1H3V3H2V2H1V1H0z" fill="#000"/></svg>
<div class="abs sunk" style="left:542px;top:16px;width:54px;height:23px;background:#fff"></div>
<div class="t" style="left:545px;top:22px;color:#808080">Day</div>
<div class="abs raised" style="left:580px;top:18px;width:15px;height:19px;"></div>
<svg class="ab" style="left:584px;top:25px" width="7" height="4"><path d="M0 0h7v1H6v1H5v1H4v1H3V3H2V2H1V1H0z" fill="#000"/></svg>
<div class="abs sunk" style="left:599px;top:16px;width:88px;height:23px;background:#fff"></div>
<div class="t" style="left:602px;top:22px;">SIM788594F</div>
<div class="abs raised" style="left:671px;top:18px;width:15px;height:19px;"></div>
<svg class="ab" style="left:675px;top:25px" width="7" height="4"><path d="M0 0h7v1H6v1H5v1H4v1H3V3H2V2H1V1H0z" fill="#000"/></svg>
<div class="abs raised2" style="left:72px;top:42px;width:77px;height:23px;background:#0000e0"></div>
<div class="t" style="left:72px;top:48px;width:77px;text-align:center;color:#fff">Buy</div>
<div class="abs raised2" style="left:151px;top:42px;width:78px;height:23px;background:#e00000"></div>
<div class="t" style="left:151px;top:48px;width:78px;text-align:center;color:#fff">Sell</div>
<div class="abs raised2" style="left:230px;top:42px;width:83px;height:23px;background:#808080"></div>
<div class="t" style="left:243px;top:48px;color:#fff">OCO/OSO</div>
<svg class="ab" style="left:297px;top:53px" width="7" height="4"><path d="M0 0h7L3.5 4z" fill="#000" shape-rendering="crispEdges"/></svg>
<div class="abs raised" style="left:313px;top:42px;width:79px;height:23px;"></div>
<div class="t" style="left:337px;top:48px;">Stage</div>
<svg class="ab" style="left:374px;top:53px" width="7" height="4"><path d="M0 0h7L3.5 4z" fill="#000" shape-rendering="crispEdges"/></svg>
<div class="abs raised" style="left:393px;top:42px;width:78px;height:23px;"></div>
<div class="t" style="left:414px;top:48px;color:#808080;text-shadow:1px 1px #fff">Cancel</div>
<svg class="ab" style="left:455px;top:53px" width="7" height="4"><path d="M0 0h7L3.5 4z" fill="#a0a0a0" shape-rendering="crispEdges"/></svg>
<div class="abs raised" style="left:472px;top:42px;width:79px;height:23px;"></div>
<div class="t" style="left:472px;top:48px;width:79px;text-align:center;">Default</div>
<div class="abs raised" style="left:613px;top:42px;width:75px;height:23px;"></div>
<div class="t" style="left:613px;top:48px;width:75px;text-align:center;">Advanced &gt;&gt;</div>
<div class="abs raised" style="left:71px;top:65px;width:78px;height:23px;"></div>
<div class="t" style="left:71px;top:70px;width:78px;text-align:center;">B:3687.25</div>
<div class="abs raised" style="left:151px;top:65px;width:78px;height:23px;"></div>
<div class="t" style="left:151px;top:70px;width:78px;text-align:center;">L:3687.50</div>
<div class="abs raised" style="left:230px;top:65px;width:78px;height:23px;"></div>
<div class="t" style="left:230px;top:70px;width:78px;text-align:center;">A:3687.50</div>
<div class="abs thinsunk" style="left:311px;top:65px;width:378px;height:22px;"></div>
<div class="t" style="left:314px;top:68px;">&lt;Connected&gt; SIMULATED ACCT: Connected to trade server</div>
<div class="abs" style="left:0;top:92px;width:1532px;height:1px;background:#fff"></div>
<div class="abs" style="left:0;top:97px;width:1532px;height:1px;background:#000"></div>
<div class="abs raised" style="left:-2px;top:103px;width:12px;height:11px;"></div>
<svg class="ab" style="left:0px;top:105px" width="8" height="7"><path d="M1.2 1.2l5.6 4.6M6.8 1.2l-5.6 4.6" stroke="#000" stroke-width="1.9"/></svg>
<div class="abs raised" style="left:-2px;top:115px;width:12px;height:12px;"></div>
<svg class="ab" style="left:3px;top:117px" width="4" height="7"><path d="M0 0l4 3.5L0 7z" fill="#808080"/></svg>
<div class="abs" style="left:1px;top:130px;width:3px;height:1px;background:#808080"></div>
<div class="abs" style="left:5px;top:130px;width:3px;height:1px;background:#808080"></div>
<div class="t" style="left:13px;top:102px;font-weight:bold;">$INDU 16351.25 <span style="color:#800000">-67.43</span></div>
<div class="t" style="left:158px;top:102px;font-weight:bold;">$COMPX(D) 4307.19 <span style="color:#800000">-27.26</span></div>
<div class="t" style="left:313px;top:102px;font-weight:bold;">$INX N/A</div>
<div class="abs" style="left:0;top:136px;width:1532px;height:1px;background:#fff"></div>
<div class="dlg">
<div class="abs winframe" style="left:531px;top:92px;width:425px;height:569px;"></div>
<div class="abs" style="left:534px;top:95px;width:419px;height:18px;background:linear-gradient(90deg,#0a246a,#a6caf0)"></div>
<div class="t" style="left:536px;top:98px;color:#fff;font-weight:bold;width:398px;overflow:hidden;letter-spacing:0.25px">Format Symbol - @NQ Range Bar 10, 1 tick [CME] E-Mini NASDAQ-100 ...</div>
<div class="abs raised" style="left:935px;top:97px;width:16px;height:14px;"></div>
<svg class="ab" style="left:939px;top:100px" width="8" height="7"><path d="M0 0h2l2 2 2-2h2v1L5.5 3.5 8 6v1H6L4 5 2 7H0V6l2.5-2.5L0 1z" fill="#000"/></svg>
<div class="abs raised" style="left:540px;top:141px;width:407px;height:480px;"></div>
<div class="abs tabh" style="left:593px;top:123px;width:41px;height:19px"></div>
<div class="t" style="left:598px;top:126px;">Style</div>
<div class="abs tabh" style="left:634px;top:123px;width:47px;height:19px"></div>
<div class="t" style="left:640px;top:126px;">Scaling</div>
<div class="abs tabh" style="left:681px;top:123px;width:59px;height:19px"></div>
<div class="t" style="left:687px;top:126px;">Properties</div>
<div class="abs tabh act" style="left:540px;top:121px;width:53px;height:22px"></div>
<div class="t" style="left:548px;top:124px;">Settings</div>
<div class="t" style="left:555px;top:160px;">Symbol:</div>
<div class="abs sunk" style="left:609px;top:154px;width:223px;height:21px;background:#fff"></div>
<div class="abs" style="left:611px;top:157px;width:28px;height:13px;background:#0a246a"></div>
<div class="t" style="left:612px;top:157px;color:#fff">@NQ</div>
<div class="abs raised" style="left:815px;top:156px;width:15px;height:17px;"></div>
<svg class="ab" style="left:819px;top:162px" width="7" height="4"><path d="M0 0h7v1H6v1H5v1H4v1H3V3H2V2H1V1H0z" fill="#000"/></svg>
<div class="abs raised" style="left:841px;top:154px;width:77px;height:23px;"></div>
<svg class="ab" style="left:848px;top:156px" width="19" height="17" shape-rendering="crispEdges"><rect x="7" y="2" width="10" height="6" fill="#fff"/><path d="M9 3h1v3H9zM11 3h1v3h-1zM13 3h1v3h-1zM15 3h1v3h-1z" fill="#808080"/><rect x="16" y="1" width="1" height="7" fill="#0000a0"/><rect x="7" y="7" width="10" height="1" fill="#0000a0"/><rect x="1" y="5" width="6" height="6" fill="#fff"/><path d="M2 6h1v3H2zM4 6h1v3H4z" fill="#808080"/><rect x="0" y="11" width="7" height="1" fill="#0000a0"/><circle cx="11" cy="9.5" r="3.2" fill="#fff" stroke="#000" stroke-width="1.4" shape-rendering="geometricPrecision"/><path d="M10 8h2v1h-2zM9.5 10h1v1h-1zM11.5 10h1v1h-1z" fill="#0000ff"/><path d="M13.6 12.2l2.6 2.8" stroke="#000" stroke-width="2" shape-rendering="geometricPrecision"/></svg>
<div class="t" style="left:867px;top:159px;"><u>L</u>ookup...</div>
<div class="t" style="left:555px;top:193px;">Select Interval:</div>
<div class="abs" style="left:628px;top:200px;width:27px;height:1px;background:#808080"></div><div class="abs" style="left:628px;top:201px;width:27px;height:1px;background:#fff"></div>
<div class="abs sunk" style="left:553px;top:210px;width:104px;height:216px;background:#fff"></div>
<div class="t" style="left:557px;top:213px;">Tick</div>
<div class="t" style="left:557px;top:227px;">Volume</div>
<div class="t" style="left:557px;top:241px;">Second</div>
<div class="t" style="left:557px;top:255px;">Minute</div>
<div class="t" style="left:557px;top:269px;">Daily</div>
<div class="t" style="left:557px;top:283px;">Weekly</div>
<div class="t" style="left:557px;top:297px;">Monthly</div>
<div class="abs" style="left:557px;top:317px;width:96px;height:1px;background:#808080"></div>
<div class="t" style="left:557px;top:325px;">Kagi</div>
<div class="t" style="left:557px;top:339px;">Kase</div>
<div class="t" style="left:557px;top:353px;">Line Break</div>
<div class="t" style="left:557px;top:367px;">Momentum</div>
<div class="t" style="left:557px;top:381px;">Point &amp; Figure</div>
<div class="abs" style="left:555px;top:394px;width:100px;height:14px;background:#0a246a"></div>
<div class="t" style="left:557px;top:395px;color:#fff">Range</div>
<div class="t" style="left:557px;top:409px;">Renko</div>
<div class="t" style="left:679px;top:193px;">Interval Settings:</div>
<svg class="ab" style="left:763px;top:192px" width="16" height="16"><defs><linearGradient id="hg" x1="0" y1="0" x2="0" y2="1"><stop offset="0" stop-color="#2f6db0"/><stop offset="1" stop-color="#3a6fa8"/></linearGradient></defs><circle cx="8" cy="8" r="6.6" fill="url(#hg)" stroke="#f4f6fa" stroke-width="1.4"/><text x="8" y="12.2" font-family="Liberation Sans" font-weight="bold" font-size="11" fill="#fff" text-anchor="middle">?</text></svg>
<div class="abs" style="left:783px;top:200px;width:141px;height:1px;background:#808080"></div><div class="abs" style="left:783px;top:201px;width:141px;height:1px;background:#fff"></div>
<div class="t" style="left:702px;top:211px;">Range:</div>
<div class="abs sunk" style="left:702px;top:226px;width:60px;height:20px;background:#fff"></div>
<div class="t" style="left:705px;top:229px;">10</div>
<div class="t" style="left:702px;top:261px;">Using:</div>
<div class="abs sunk" style="left:737px;top:257px;width:45px;height:20px;background:#fff"></div>
<div class="t" style="left:740px;top:260px;">1</div>
<div class="abs sunk" style="left:789px;top:257px;width:69px;height:20px;background:#fff"></div>
<div class="t" style="left:793px;top:262px;">Tick</div>
<div class="abs raised" style="left:841px;top:259px;width:15px;height:16px;"></div>
<svg class="ab" style="left:845px;top:265px" width="7" height="4"><path d="M0 0h7v1H6v1H5v1H4v1H3V3H2V2H1V1H0z" fill="#000"/></svg>
<div class="t" style="left:861px;top:261px;">Interval</div>
<div class="t" style="left:679px;top:291px;">Range:</div>
<div class="abs" style="left:717px;top:298px;width:207px;height:1px;background:#808080"></div><div class="abs" style="left:717px;top:299px;width:207px;height:1px;background:#fff"></div>
<div class="t" style="left:711px;top:315px;">Last Date:</div>
<div class="abs sunk" style="left:798px;top:309px;width:111px;height:23px;background:#fff"></div>
<div class="t" style="left:800px;top:315px;">03/11/2014</div>
<div class="abs raised" style="left:891px;top:311px;width:16px;height:19px;"></div>
<svg class="ab" style="left:896px;top:318px" width="7" height="4"><path d="M0 0h7v1H6v1H5v1H4v1H3V3H2V2H1V1H0z" fill="#000"/></svg>
<svg class="ab" style="left:712px;top:344px" width="12" height="12"><path d="M0.5 6A5.5 5.5 0 0 1 11.5 6" fill="none" stroke="#808080" stroke-width="1"/><path d="M11.5 6A5.5 5.5 0 0 1 0.5 6" fill="none" stroke="#fff" stroke-width="1"/><path d="M1.5 6A4.5 4.5 0 0 1 10.5 6" fill="none" stroke="#404040" stroke-width="1"/><path d="M10.5 6A4.5 4.5 0 0 1 1.5 6" fill="none" stroke="#d4d0c8" stroke-width="1"/><circle cx="6" cy="6" r="4" fill="#fff"/><circle cx="6" cy="6" r="2" fill="#000"/></svg>
<div class="abs sunk" style="left:738px;top:343px;width:51px;height:20px;background:#fff"></div>
<div class="t" style="left:741px;top:347px;">2</div>
<div class="abs sunk" style="left:799px;top:343px;width:110px;height:21px;background:#fff"></div>
<div class="t" style="left:803px;top:348px;">Weeks Back</div>
<div class="abs raised" style="left:891px;top:345px;width:16px;height:17px;"></div>
<svg class="ab" style="left:896px;top:351px" width="7" height="4"><path d="M0 0h7v1H6v1H5v1H4v1H3V3H2V2H1V1H0z" fill="#000"/></svg>
<svg class="ab" style="left:712px;top:375px" width="12" height="12"><path d="M0.5 6A5.5 5.5 0 0 1 11.5 6" fill="none" stroke="#808080" stroke-width="1"/><path d="M11.5 6A5.5 5.5 0 0 1 0.5 6" fill="none" stroke="#fff" stroke-width="1"/><path d="M1.5 6A4.5 4.5 0 0 1 10.5 6" fill="none" stroke="#404040" stroke-width="1"/><path d="M10.5 6A4.5 4.5 0 0 1 1.5 6" fill="none" stroke="#d4d0c8" stroke-width="1"/><circle cx="6" cy="6" r="4" fill="#d4d0c8"/></svg>
<div class="t" style="left:729px;top:376px;color:#808080;text-shadow:1px 1px #fff">Bars Back</div>
<div class="abs sunk" style="left:799px;top:371px;width:111px;height:23px;background:#d4d0c8"></div>
<div class="t" style="left:802px;top:375px;color:#808080">500</div>
<svg class="ab" style="left:712px;top:409px" width="12" height="12"><path d="M0.5 6A5.5 5.5 0 0 1 11.5 6" fill="none" stroke="#808080" stroke-width="1"/><path d="M11.5 6A5.5 5.5 0 0 1 0.5 6" fill="none" stroke="#fff" stroke-width="1"/><path d="M1.5 6A4.5 4.5 0 0 1 10.5 6" fill="none" stroke="#404040" stroke-width="1"/><path d="M10.5 6A4.5 4.5 0 0 1 1.5 6" fill="none" stroke="#d4d0c8" stroke-width="1"/><circle cx="6" cy="6" r="4" fill="#fff"/></svg>
<div class="t" style="left:729px;top:409px;">First Date</div>
<div class="abs sunk" style="left:799px;top:402px;width:111px;height:24px;background:#d4d0c8"></div>
<div class="t" style="left:802px;top:407px;color:#808080">10/15/2010</div>
<div class="abs raised" style="left:892px;top:404px;width:16px;height:20px;"></div>
<svg class="ab" style="left:897px;top:412px" width="7" height="4"><path d="M0 0h7v1H6v1H5v1H4v1H3V3H2V2H1V1H0z" fill="#808080"/></svg>
<div class="abs sunk" style="left:711px;top:438px;width:13px;height:13px;background:#fff"></div><svg class="ab" style="left:714px;top:441px" width="7" height="7"><path d="M0 2h1v1h1v1h1V3h1V2h1V1h1V0h1v3H6v1H5v1H4v1H3v1H2V6H1V5H0z" fill="#000"/></svg>
<div class="t" style="left:729px;top:439px;">Apply time-based Range setting to all</div>
<div class="t" style="left:729px;top:452px;">data series</div>
<div class="t" style="left:679px;top:468px;">Display:</div>
<div class="abs" style="left:718px;top:473px;width:206px;height:1px;background:#808080"></div><div class="abs" style="left:718px;top:474px;width:206px;height:1px;background:#fff"></div>
<div class="t" style="left:711px;top:486px;">Time Zone:</div>
<div class="abs sunk" style="left:799px;top:480px;width:110px;height:21px;background:#fff"></div>
<div class="t" style="left:803px;top:485px;">Local</div>
<div class="abs raised" style="left:892px;top:482px;width:15px;height:17px;"></div>
<svg class="ab" style="left:896px;top:488px" width="7" height="4"><path d="M0 0h7v1H6v1H5v1H4v1H3V3H2V2H1V1H0z" fill="#000"/></svg>
<div class="abs sunk" style="left:555px;top:562px;width:13px;height:13px;background:#fff"></div>
<div class="t" style="left:573px;top:563px;">Set as Default</div>
<div class="abs defbtn" style="left:710px;top:628px;width:75px;height:23px;"></div>
<div class="t" style="left:710px;top:632px;width:75px;text-align:center;">OK</div>
<div class="abs raised" style="left:791px;top:628px;width:75px;height:23px;"></div>
<div class="t" style="left:791px;top:632px;width:75px;text-align:center;">Cancel</div>
<div class="abs raised" style="left:872px;top:628px;width:75px;height:23px;"></div>
<div class="t" style="left:872px;top:632px;width:75px;text-align:center;">Help</div>
</div>
</body></html>
